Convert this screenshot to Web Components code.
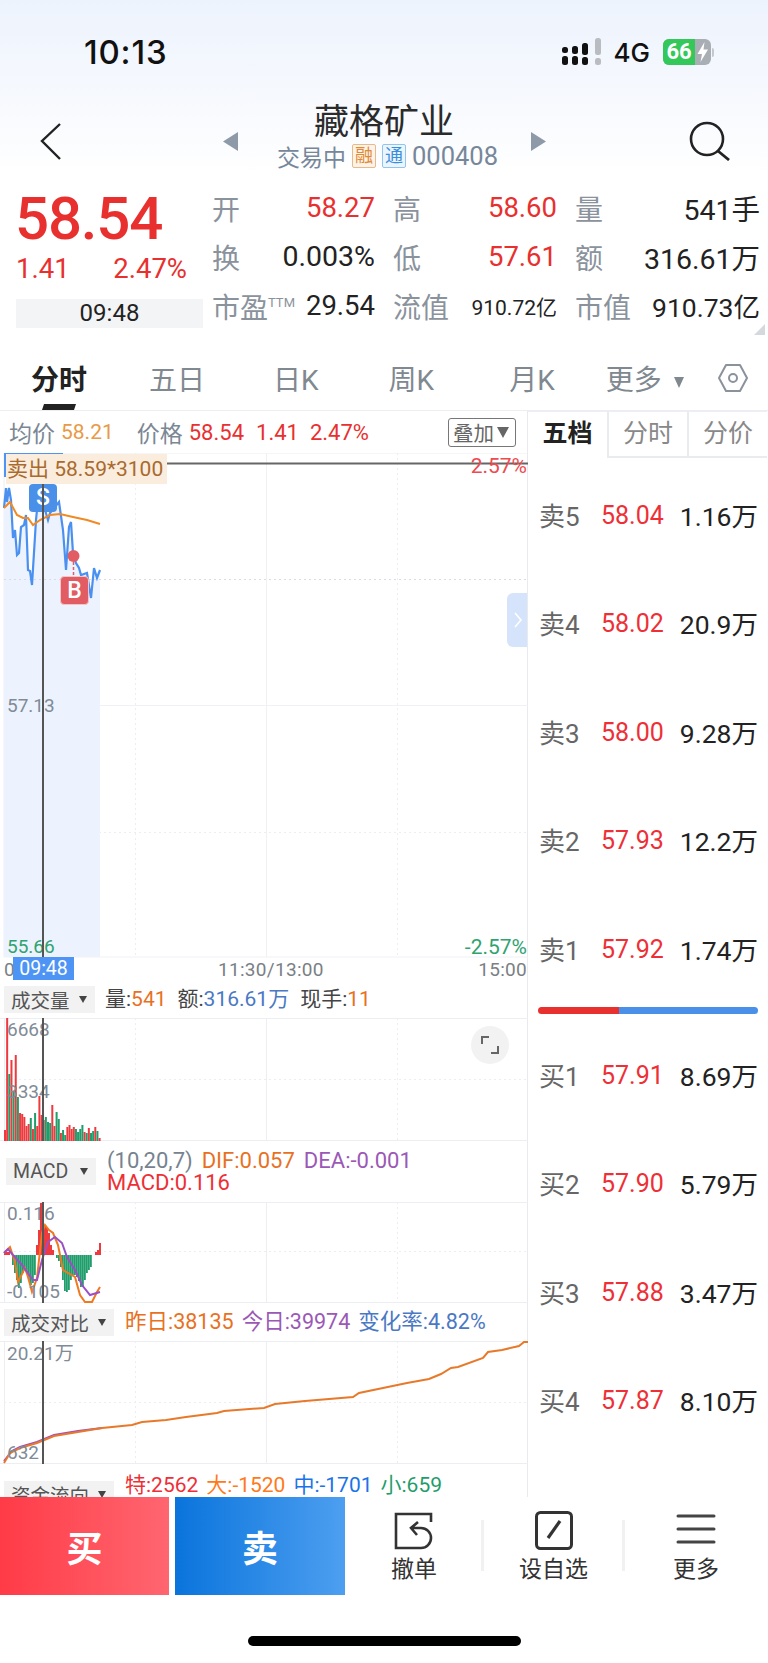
<!DOCTYPE html>
<html lang="zh">
<head>
<meta charset="utf-8">
<title>藏格矿业</title>
<style>
    html, body { margin: 0; padding: 0; background: #fff; }
    body {
        width: 768px;
        height: 1663px;
        overflow: hidden;
        display: flex;
        flex-direction: column;
        font-family: Roboto, "Noto Sans CJK SC", sans-serif;
        color: #222;
    }
    .gray { color: #76838f; }
    .dark { color: #444; }
    .orange { color: #e8711f; }
    .blue { color: #4a78c4; }
    .purple { color: #9b59b6; }
    .red { color: #ee2f36; }
    .flow-orange { color: #ff7a1a; }
    .flow-blue { color: #1a73e8; }
    .flow-green { color: #1f9d6a; }
    .main-row { display: grid; grid-template-columns: 528px 240px; height: 1086px; overflow: hidden; flex: none; }
    .chart-column { min-width: 0; }
</style>
</head>
<body>
<stock-header>
    <status-bar></status-bar>
    <stock-title></stock-title>
    <quote-panel></quote-panel>
</stock-header>
<period-tabs></period-tabs>
<div class="main-row">
    <div class="chart-column">
        <price-head></price-head>
        <minute-chart></minute-chart>
        <indicator-pane label="成交量" label-width="91" head-height="38" chart-height="123" kind="volume" gap="11" offset="10" font="21">
            <span class="dark">量:<span class="orange">541</span></span>
            <span class="dark">额:<span class="blue">316.61万</span></span>
            <span class="dark">现手:<span class="orange">11</span></span>
        </indicator-pane>
        <indicator-pane label="MACD" label-width="90" head-height="61" chart-height="101" kind="macd" gap="9" offset="11" label-left="6" font="22" wrap>
            <span class="gray">(10,20,7)</span>
            <span class="orange">DIF:0.057</span>
            <span class="purple">DEA:-0.001</span>
            <span class="red">MACD:0.116</span>
        </indicator-pane>
        <indicator-pane label="成交对比" label-width="110" head-height="38" chart-height="123" kind="compare" gap="8" offset="11" font="21.5">
            <span class="orange">昨日:38135</span>
            <span class="purple">今日:39974</span>
            <span class="blue">变化率:4.82%</span>
        </indicator-pane>
        <indicator-pane label="资金流向" label-width="110" head-height="38" chart-height="0" kind="flow" gap="8" offset="11" font="21" raised>
            <span class="red">特:2562</span>
            <span class="flow-orange">大:-1520</span>
            <span class="flow-blue">中:-1701</span>
            <span class="flow-green">小:659</span>
        </indicator-pane>
    </div>
    <order-book></order-book>
</div>
<trade-bar></trade-bar>
<home-bar></home-bar>

<script>
const GRID = '#eceef2';

const toPoints = list => list.map(p => p.join(',')).join(' ');

class StockHeader extends HTMLElement {
    constructor() {
        super();
        this.attachShadow({ mode: 'open' });
        this.shadowRoot.innerHTML = `
            <style>
                :host {
                    display: block;
                    height: 339px;
                    flex: none;
                    background: linear-gradient(#edf3fd 0, #f8fafe 110px, #fff 175px);
                }
            </style>
            <slot></slot>
        `;
    }
}

class StatusBar extends HTMLElement {
    constructor() {
        super();
        this.attachShadow({ mode: 'open' });
        this.shadowRoot.innerHTML = `
            <style>
                :host {
                    display: flex;
                    align-items: center;
                    height: 104px;
                    padding: 0 54px 0 84px;
                    box-sizing: border-box;
                    color: #111;
                }
                .time { font: 500 33px Inter, sans-serif; letter-spacing: 0.8px; flex: 1; }
                svg { display: block; }
                .net { font: 500 26px Inter, sans-serif; margin: 0 13px 0 12px; }
                .battery {
                    display: flex;
                    width: 48px;
                    height: 26px;
                    border-radius: 6px;
                    overflow: hidden;
                    background: #a9aeb4;
                }
                .level {
                    width: 32px;
                    background: #34c759;
                    color: #fff;
                    font: 700 22px/26px Roboto, sans-serif;
                    text-align: center;
                }
                .nub { width: 2px; height: 9px; margin-left: 1px; background: #c4c8cc; border-radius: 0 2px 2px 0; }
            </style>
            <span class="time">10:13</span>
            <svg width="40" height="28" viewBox="0 0 40 28">
                <g fill="#111">
                    <rect x="0" y="9" width="6" height="6" rx="2.5"/><rect x="0" y="18" width="6" height="9" rx="2.5"/>
                    <rect x="10" y="8" width="6" height="8" rx="2.5"/><rect x="10" y="18" width="6" height="9" rx="2.5"/>
                    <rect x="20" y="5" width="6" height="12" rx="2.5"/><rect x="20" y="19" width="6" height="8" rx="2.5"/>
                </g>
                <rect x="33" y="0" width="6" height="17" rx="2.5" fill="#b9bdc2"/>
                <rect x="33" y="20" width="6" height="7" rx="2.5" fill="#b9bdc2"/>
            </svg>
            <span class="net">4G</span>
            <div class="battery">
                <div class="level">66</div>
                <svg width="16" height="26" viewBox="0 0 16 26"><path d="M9.5 3 L2.5 15 H7 L5.5 23 L13 10.5 H8.5 Z" fill="#fff"/></svg>
            </div>
            <div class="nub"></div>
        `;
    }
}

class StockTitle extends HTMLElement {
    constructor() {
        super();
        this.attachShadow({ mode: 'open' });
        this.shadowRoot.innerHTML = `
            <style>
                :host {
                    display: grid;
                    grid-template-columns: 274px 220px 274px;
                    height: 74px;
                }
                .side { display: flex; align-items: center; justify-content: space-between; padding-bottom: 6px; }
                .left { padding: 0 36px 0 40px; }
                .right { padding: 0 37px 0 37px; }
                svg { display: block; }
                .center { display: flex; flex-direction: column; align-items: center; }
                h1 { margin: 0; font-weight: 400; font-size: 35px; line-height: 37px; color: #2b2b2b; white-space: nowrap; }
                .sub { display: flex; align-items: center; gap: 6px; margin: 2px 0 0 3px; align-self: flex-start; white-space: nowrap; color: #77879a; height: 25px; }
                .sub span:first-child { font-size: 23px; }
                .badge {
                    width: 22px;
                    height: 22px;
                    font-size: 18px;
                    line-height: 21px;
                    text-align: center;
                    border: 1px solid;
                    border-radius: 2px;
                }
                .rong { color: #e08a36; border-color: #e9b98c; background: #fdf3e8; }
                .tong { color: #3a8fdc; border-color: #93c4ee; background: #ebf5fd; }
                .code { font-size: 25.5px; }
            </style>
            <div class="side left">
                <svg width="22" height="38" viewBox="0 0 22 38"><path d="M20 2 L2 19 L20 37" fill="none" stroke="#222" stroke-width="2.4"/></svg>
                <svg width="15" height="19" viewBox="0 0 15 19"><path d="M15 0 V19 L0 9.5 Z" fill="#8e9aa8"/></svg>
            </div>
            <div class="center">
                <h1>藏格矿业</h1>
                <div class="sub">
                    <span>交易中</span><span class="badge rong">融</span><span class="badge tong">通</span><span class="code">000408</span>
                </div>
            </div>
            <div class="side right">
                <svg width="15" height="19" viewBox="0 0 15 19"><path d="M0 0 V19 L15 9.5 Z" fill="#8e9aa8"/></svg>
                <svg width="42" height="40" viewBox="0 0 42 40"><circle cx="18" cy="18" r="16" fill="none" stroke="#222" stroke-width="2.6"/><path d="M29 30 L40 39" stroke="#222" stroke-width="2.8"/></svg>
            </div>
        `;
    }
}

class QuotePanel extends HTMLElement {
    constructor() {
        super();
        this.attachShadow({ mode: 'open' });
        const stats = [
            ['开', '58.27', 'up'], ['高', '58.60', 'up'], ['量', '541手', 'wide'],
            ['换', '0.003%', 'wide'], ['低', '57.61', 'up'], ['额', '316.61万', 'wide'],
            ['市盈<sup>TTM</sup>', '29.54', ''], ['流值', '910.72亿', 'small'], ['市值', '910.73亿', 'narrow']
        ];
        this.shadowRoot.innerHTML = `
            <style>
                :host {
                    display: flex;
                    position: relative;
                    height: 161px;
                    box-sizing: border-box;
                    padding: 5px 8px 0 16px;
                }
                .price { width: 196px; flex: none; }
                .last { font-size: 60px; font-weight: 500; line-height: 66px; letter-spacing: -1.2px; color: #e8302f; margin: 3px 0 0 -1px; }
                .change {
                    display: flex;
                    justify-content: space-between;
                    width: 171px;
                    font-size: 27.5px;
                    line-height: 34px;
                    color: #e8302f;
                }
                .clock {
                    width: 187px;
                    height: 29px;
                    margin-top: 13px;
                    background: #f3f4f6;
                    font-size: 24px;
                    line-height: 28px;
                    text-align: center;
                }
                .stats {
                    display: grid;
                    grid-template-columns: 163px 164px 185px;
                    grid-auto-rows: 49px;
                    column-gap: 18px;
                }
                .cell { display: flex; justify-content: space-between; align-items: center; white-space: nowrap; }
                .label { font-size: 28px; color: #8a929c; }
                sup { font-size: 13px; vertical-align: 11px; line-height: 0; }
                .value { font-size: 27.5px; color: #222; }
                .up { color: #e8302f; }
                .small { font-size: 21px; }
                .wide { font-size: 28.5px; }
                .narrow { font-size: 26.5px; }
                .corner { position: absolute; right: 3px; bottom: 4px; width: 0; height: 0; border-left: 11px solid transparent; border-bottom: 11px solid #d5d8dd; }
            </style>
            <div class="price">
                <div class="last">58.54</div>
                <div class="change"><span>1.41</span><span>2.47%</span></div>
                <div class="clock">09:48</div>
            </div>
            <div class="stats">
                ${stats.map(s => `
                    <div class="cell"><span class="label">${s[0]}</span><span class="value ${s[2]}">${s[1]}</span></div>
                `).join('')}
            </div>
            <div class="corner"></div>
        `;
    }
}

class PeriodTabs extends HTMLElement {
    constructor() {
        super();
        this.attachShadow({ mode: 'open' });
        this.shadowRoot.innerHTML = `
            <style>
                :host {
                    display: flex;
                    align-items: flex-start;
                    height: 62px;
                    flex: none;
                    box-sizing: border-box;
                    margin-top: 10px;
                    border-bottom: 1px solid #eceef3;
                    color: #808890;
                    font-size: 28px;
                    white-space: nowrap;
                    position: relative;
                }
                span { line-height: 40px; margin-top: 12px; }
                .on { color: #222; font-weight: 700; position: relative; width: 56px; margin-left: 31px; }
                .on::after {
                    content: '';
                    position: absolute;
                    left: 11px;
                    top: 43px;
                    width: 34px;
                    height: 6px;
                    background: #222;
                    clip-path: polygon(2px 0, 100% 0, calc(100% - 2px) 100%, 0 100%);
                }
                .arrow { width: 0; height: 0; margin: 28px 0 0 12px; border: 5.5px solid transparent; border-top: 11px solid #808890; border-bottom: 0; }
                svg { display: block; margin: 14px 0 0 33px; }
            </style>
            <span class="on">分时</span>
            <span style="margin-left:62px">五日</span>
            <span style="margin-left:68px">日K</span>
            <span style="margin-left:70px">周K</span>
            <span style="margin-left:75px">月K</span>
            <span style="margin-left:51px">更多</span>
            <i class="arrow"></i>
            <svg width="32" height="30" viewBox="0 0 32 30"><path d="M9 2 H23 L30 15 L23 28 H9 L2 15 Z" fill="none" stroke="#8a929c" stroke-width="2" stroke-linejoin="round"/><circle cx="16" cy="15" r="4" fill="none" stroke="#8a929c" stroke-width="2"/></svg>
        `;
    }
}

class PriceHead extends HTMLElement {
    constructor() {
        super();
        this.attachShadow({ mode: 'open' });
        this.shadowRoot.innerHTML = `
            <style>
                :host {
                    display: flex;
                    align-items: center;
                    height: 42px;
                    padding: 0 12px 0 9px;
                    font-size: 22px;
                    color: #7b8794;
                    white-space: nowrap;
                }
                .label { font-size: 23px; }
                .avg { color: #e89a45; margin-left: 6px; font-size: 21px; }
                .up { color: #e8302f; }
                .overlay {
                    display: flex;
                    align-items: center;
                    gap: 3px;
                    margin-left: auto;
                    width: 68px;
                    height: 29px;
                    box-sizing: border-box;
                    padding-left: 4px;
                    border: 1px solid #777;
                    border-radius: 3px;
                    color: #666;
                    font-size: 20.5px;
                }
                i { width: 0; height: 0; border: 6px solid transparent; border-top: 11px solid #666; border-bottom: 0; }
            </style>
            <span class="label">均价</span><span class="avg">58.21</span>
            <span class="label" style="margin-left:23px">价格</span>
            <span class="up" style="margin-left:6px">58.54</span>
            <span class="up" style="margin-left:12px">1.41</span>
            <span class="up" style="margin-left:11px">2.47%</span>
            <div class="overlay"><span>叠加</span><i></i></div>
        `;
    }
}

class MinuteChart extends HTMLElement {
    constructor() {
        super();
        this.attachShadow({ mode: 'open' });
        const blue = [[4,508],[6,488],[7,502],[9,488],[11,500],[13,538],[15,530],[17,555],[19,553],[21,527],[24,525],[26,515],[28,570],[30,571],[32,585],[36,520],[38,500],[43,503],[48,520],[50,513],[59,502],[63,530],[66,570],[69,527],[71,522],[73,553],[76,563],[79,568],[81,575],[87,573],[91,598],[94,568],[97,578],[100,570]];
        const avg = [[4,508],[10,502],[17,515],[23,518],[28,518],[33,525],[40,520],[50,515],[60,514],[73,517],[87,520],[100,524]];
        this.shadowRoot.innerHTML = `
            <style>
                :host {
                    display: block;
                    position: relative;
                    height: 527px;
                    font-size: 19px;
                    color: #7f8b97;
                    overflow: hidden;
                }
                svg { position: absolute; left: 0; top: 0; display: block; }
                .abs { position: absolute; white-space: nowrap; line-height: 22px; }
                .green { color: #2fa36f; }
                .sell-tag { left: 6px; top: 1px; width: 161px; height: 30px; box-sizing: border-box; padding-left: 1px; background: #faeddd; color: #a96a2e; font-size: 21px; line-height: 30px; }
                .pct-up { right: 1px; top: 2px; color: #ee4a4f; font-size: 21px; }
                .pct-down { right: 1px; top: 483px; font-size: 21px; }
                .mark { width: 28px; height: 28px; border-radius: 4px; color: #fff; font-size: 23px; font-weight: 500; line-height: 28px; text-align: center; }
                .s { left: 29px; top: 31px; background: #4a90e8; }
                .b { left: 60px; top: 123px; height: 29px; background: #e25d63; border: 1px solid #f2c6c8; box-sizing: border-box; width: 29px; }
                .cursor { position: absolute; left: 42px; top: 31px; width: 1.5px; height: 473px; background: #555; }
                .cursor-time { left: 13px; top: 504px; width: 61px; height: 23px; background: #4d94f5; color: #fff; text-align: center; line-height: 23px; font-size: 19.5px; }
                .axis { letter-spacing: 0.3px; font-size: 19px; line-height: 20px; top: 507px; color: #7a7f85; }
                .slide { position: absolute; right: 1px; top: 140px; width: 20px; height: 54px; background: #d5e4fb; border-radius: 6px 0 0 6px; }
            </style>
            <svg width="528" height="527" viewBox="0 453 528 527">
                <path d="M4 453 V957" stroke="${GRID}" stroke-width="1"/>
                <path d="M135.5 453 V957 M397.5 453 V957 M4 579.5 H528 M4 832.5 H528" stroke="${GRID}" stroke-width="1" stroke-dasharray="2 3"/>
                <path d="M266.5 453 V957 M4 705.5 H528 M4 957 H528" stroke="#f0f1f5" stroke-width="1"/>
                <path d="M4 453 H528" stroke="${GRID}" stroke-width="1"/>
                <polygon points="${toPoints(blue)} 100,957 4,957" fill="#edf3fe"/>
                <path d="M4 579.5 H528" stroke="#d9dde3" stroke-width="1" stroke-dasharray="2 3"/>
                <polyline points="${toPoints(blue)}" fill="none" stroke="#4a90f0" stroke-width="2.2"/>
                <polyline points="${toPoints(avg)}" fill="none" stroke="#f08a24" stroke-width="2"/>
                <path d="M4 454 H63 M5 453 V477" stroke="#4d94f5" stroke-width="2"/>
                <path d="M167 463.5 H528" stroke="#666" stroke-width="2"/>
                <circle cx="73.5" cy="556" r="6" fill="#e25d63"/>
                <path d="M73.5 562 V577" stroke="#e25d63" stroke-width="1.5" stroke-dasharray="3 2"/>
            </svg>
            <span class="abs sell-tag">卖出 58.59*3100</span>
            <span class="abs pct-up">2.57%</span>
            <span class="abs" style="left:7px;top:242px">57.13</span>
            <span class="abs green" style="left:7px;top:483px">55.66</span>
            <span class="abs green pct-down">-2.57%</span>
            <span class="abs mark s">S</span>
            <span class="abs mark b">B</span>
            <div class="cursor"></div>
            <span class="abs axis" style="left:4px">0</span>
            <span class="abs cursor-time">09:48</span>
            <span class="abs axis" style="left:218px">11:30/13:00</span>
            <span class="abs axis" style="right:1px">15:00</span>
            <div class="slide">
                <svg width="20" height="54" viewBox="0 0 20 54"><path d="M8 20 L14 27 L8 34" fill="none" stroke="#fff" stroke-width="1.6"/></svg>
            </div>
        `;
    }
}

// each pane draws its own chart, coordinates are page coordinates via viewBox
const PANE_CHARTS = {
    volume() {
        const bars = [[11,'r'],[123,'r'],[67,'g'],[81,'r'],[50,'g'],[86,'r'],[44,'g'],[28,'r'],[27,'r'],[24,'r'],[15,'r'],[17,'r'],[23,'g'],[12,'r'],[28,'g'],[15,'r'],[45,'r'],[26,'r'],[21,'r'],[24,'g'],[19,'g'],[18,'g'],[36,'r'],[15,'r'],[29,'g'],[22,'g'],[8,'r'],[11,'g'],[6,'g'],[14,'r'],[16,'r'],[12,'r'],[14,'r'],[12,'g'],[9,'g'],[12,'g'],[16,'g'],[9,'r'],[8,'g'],[13,'r'],[8,'g'],[10,'g'],[14,'r'],[10,'g'],[3,'r']];
        return {
            svg: bars.map((b, i) => `<rect x="${(4 + i * 2.15).toFixed(2)}" y="${1141 - b[0]}" width="2" height="${b[0]}" fill="${b[1] === 'r' ? '#ee3a3f' : '#1f9d6a'}"/>`).join(''),
            labels: `<span class="abs" style="left:7px;top:1px">6668</span><span class="abs" style="left:7px;top:63px">3334</span>
                <div class="fit">
                    <svg width="38" height="38" viewBox="0 0 38 38" style="display:block"><path d="M11 18 V11 H18 M27 20 V27 H20" fill="none" stroke="#666" stroke-width="2"/></svg>
                </div>`,
            mid: 1079,
            top: 1018
        };
    },
    macd() {
        const zero = 1255;
        const red = [[4,3],[6,3],[8,3],[36,10],[38,25],[40,52],[42,52],[44,30],[46,27],[48,22],[50,10],[52,5],[95,3],[97,5],[99,12]];
        const green = [[12,10],[14,18],[16,25],[18,33],[20,28],[22,18],[24,12],[26,18],[28,25],[30,30],[32,28],[34,20],[56,3],[58,6],[60,12],[62,25],[64,36],[66,37],[68,35],[70,25],[72,20],[74,20],[76,22],[78,26],[80,32],[82,32],[84,25],[86,18],[88,15],[90,12]];
        const dif = [[4,1253],[10,1247],[15,1262],[18,1282],[25,1268],[28,1277],[32,1292],[37,1278],[42,1233],[45,1225],[49,1230],[53,1233],[58,1245],[63,1270],[68,1273],[75,1277],[80,1295],[85,1302],[92,1302],[97,1292],[100,1287]];
        const dea = [[4,1253],[8,1249],[13,1255],[22,1265],[33,1280],[37,1280],[42,1260],[48,1242],[55,1237],[62,1243],[67,1257],[75,1270],[82,1285],[90,1295],[100,1292]];
        return {
            svg: red.map(b => `<rect x="${b[0]}" y="${zero - b[1]}" width="2" height="${b[1]}" fill="#ee3a3f"/>`).join('')
                + green.map(b => `<rect x="${b[0]}" y="${zero}" width="1.8" height="${b[1]}" fill="#1f9d6a"/>`).join('')
                + `<polyline points="${toPoints(dif)}" fill="none" stroke="#f0791f" stroke-width="2"/>
                   <polyline points="${toPoints(dea)}" fill="none" stroke="#9b4fc4" stroke-width="2"/>`,
            labels: `<span class="abs" style="left:7px;top:1px">0.116</span><span class="abs" style="left:7px;top:79px">-0.105</span>`,
            mid: 1251,
            top: 1202
        };
    },
    compare() {
        const today = [[4,1463],[10,1453],[20,1448],[37,1443],[54,1436],[78,1432],[102,1428],[132,1425],[142,1422],[166,1420],[186,1417],[217,1413],[224,1411],[264,1408],[275,1404],[305,1401],[353,1397],[359,1393],[383,1388],[407,1383],[429,1379],[441,1374],[451,1368],[458,1367],[483,1358],[488,1352],[502,1350],[519,1346],[524,1342],[528,1342]];
        const past = [[4,1461],[12,1451],[20,1447],[37,1442],[54,1435],[78,1431],[102,1428]];
        return {
            svg: `<polyline points="${toPoints(past)}" fill="none" stroke="#9b4fc4" stroke-width="2"/>
                  <polyline points="${toPoints(today)}" fill="none" stroke="#e8792a" stroke-width="2"/>`,
            labels: `<span class="abs" style="left:7px;top:2px">20.21万</span><span class="abs" style="left:7px;top:101px">632</span>`,
            mid: 1402,
            top: 1341
        };
    }
};

class IndicatorPane extends HTMLElement {
    connectedCallback() {
        if (this.shadowRoot) return;
        this.attachShadow({ mode: 'open' });
        const headHeight = +this.getAttribute('head-height');
        const chartHeight = +this.getAttribute('chart-height');
        const labelLeft = +(this.getAttribute('label-left') || 4);
        const labelWidth = +this.getAttribute('label-width');
        const gap = +(this.getAttribute('gap') || 11);
        const offset = +this.getAttribute('offset');
        const draw = PANE_CHARTS[this.getAttribute('kind')];
        const chart = draw ? draw() : null;
        const raised = this.hasAttribute('raised');
        this.shadowRoot.innerHTML = `
            <style>
                :host {
                    display: block;
                    font-size: ${this.getAttribute('font') || 20}px;
                    color: #444;
                }
                .head {
                    display: flex;
                    align-items: ${raised ? 'flex-start' : 'center'};
                    height: ${headHeight}px;
                    padding-left: ${labelLeft}px;
                    box-sizing: border-box;
                    overflow: ${raised ? 'visible' : 'hidden'};
                    white-space: nowrap;
                }
                .picker {
                    display: flex;
                    align-items: center;
                    justify-content: space-between;
                    flex: none;
                    width: ${labelWidth}px;
                    height: 27px;
                    box-sizing: border-box;
                    padding: 0 8px 0 7px;
                    background: #f2f2f2;
                    color: #555;
                    font-size: 19.5px;
                    ${raised ? 'margin-top: 17px;' : ''}
                }
                .picker i { width: 0; height: 0; border: 4px solid transparent; border-top: 7px solid #444; border-bottom: 0; }
                .values {
                    display: flex;
                    flex-wrap: ${this.hasAttribute('wrap') ? 'wrap' : 'nowrap'};
                    column-gap: ${gap}px;
                    margin-left: ${offset}px;
                    line-height: 22px;
                    ${raised ? 'margin-top: 10px;' : ''}
                    ${this.hasAttribute('wrap') ? 'width: 325px;' : ''}
                }
                .chart {
                    position: relative;
                    height: ${chartHeight}px;
                    font-size: 19px;
                    color: #7f8b97;
                    overflow: hidden;
                }
                .chart > svg { position: absolute; left: 0; top: 0; display: block; }
                .abs { position: absolute; white-space: nowrap; line-height: 22px; }
                .cursor { position: absolute; left: 42px; top: 0; bottom: 0; width: 1.5px; background: #555; }
                .fit { position: absolute; left: 471px; top: 8px; width: 38px; height: 38px; border-radius: 50%; background: #f2f2f2; }
            </style>
            <div class="head">
                <div class="picker"><span>${this.getAttribute('label')}</span><i></i></div>
                <div class="values"><slot></slot></div>
            </div>
            ${chart ? `
            <div class="chart">
                <svg width="528" height="${chartHeight}" viewBox="0 ${chart.top} 528 ${chartHeight}">
                    <path d="M0 ${chart.top + 0.5} H528 M0 ${chart.top + chartHeight - 0.5} H528 M4.5 ${chart.top} V${chart.top + chartHeight} M266.5 ${chart.top} V${chart.top + chartHeight}" stroke="${GRID}"/>
                    <path d="M135.5 ${chart.top} V${chart.top + chartHeight} M397.5 ${chart.top} V${chart.top + chartHeight} M4 ${chart.mid + 0.5} H528" stroke="${GRID}" stroke-dasharray="2 3"/>
                    ${chart.svg}
                </svg>
                ${chart.labels}
                <div class="cursor"></div>
            </div>` : ''}
        `;
    }
}

class OrderBook extends HTMLElement {
    constructor() {
        super();
        this.attachShadow({ mode: 'open' });
        const asks = [['卖5','58.04','1.16万'],['卖4','58.02','20.9万'],['卖3','58.00','9.28万'],['卖2','57.93','12.2万'],['卖1','57.92','1.74万']];
        const bids = [['买1','57.91','8.69万'],['买2','57.90','5.79万'],['买3','57.88','3.47万'],['买4','57.87','8.10万']];
        const row = r => `<div class="row"><span class="name">${r[0]}</span><span class="px">${r[1]}</span><span class="vol">${r[2]}</span></div>`;
        this.shadowRoot.innerHTML = `
            <style>
                :host {
                    display: block;
                    box-sizing: border-box;
                    border-left: 1px solid #e8eaee;
                    margin-left: -1px;
                    width: 241px;
                    font-size: 25px;
                    overflow: hidden;
                }
                .tabs { display: grid; grid-template-columns: 79px 80px 80px; height: 44px; margin-bottom: 6px; }
                .tabs span { text-align: center; line-height: 44px; color: #888; box-sizing: border-box; border-left: 2px solid #e9ebee; border-bottom: 2px solid #e9ebee; border-top: 1px solid #eceef3; }
                .tabs .on { color: #222; font-weight: 700; border-left: 0; border-bottom: 0; }
                .row { display: grid; grid-template-columns: 62px 1fr auto; align-items: center; height: 108.5px; padding: 0 10px 0 11px; }
                .name { color: #666; font-size: 26px; margin-top: -2px; }
                .px { color: #ee2f36; font-weight: 450; }
                .vol { color: #222; font-size: 26.5px; margin-top: -2px; }
                .ratio { display: flex; height: 7px; margin: 3px 10px 7.5px 10px; border-radius: 4px; overflow: hidden; }
                .ratio .b { width: 81px; background: #e8302f; }
                .ratio .s { flex: 1; background: #4a90e8; }
            </style>
            <div class="tabs"><span class="on">五档</span><span>分时</span><span>分价</span></div>
            ${asks.map(row).join('')}
            <div class="ratio"><div class="b"></div><div class="s"></div></div>
            ${bids.map(row).join('')}
        `;
    }
}

class TradeBar extends HTMLElement {
    constructor() {
        super();
        this.attachShadow({ mode: 'open' });
        this.shadowRoot.innerHTML = `
            <style>
                :host {
                    display: grid;
                    grid-template-columns: 169px 176px 138px 141px 144px;
                    height: 98px;
                    flex: none;
                    background: #fff;
                }
                .trade { color: #fff; font-size: 36px; font-weight: 700; display: flex; align-items: center; justify-content: center; }
                .buy { background: linear-gradient(90deg, #ff3b47, #ff6670); }
                .sell { background: linear-gradient(90deg, #0a74dc, #4d9ff0); margin-left: 6px; }
                .tool { position: relative; display: flex; flex-direction: column; align-items: center; color: #333; font-size: 23px; }
                .tool svg { display: block; height: 42px; margin-top: 14px; }
                .tool span { line-height: 28px; margin-top: 3px; }
                .line::after { content: ''; position: absolute; right: -1px; top: 23px; width: 3px; height: 51px; background: #f1f1f1; }
            </style>
            <div class="trade buy">买</div>
            <div class="trade sell">卖</div>
            <div class="tool line">
                <svg width="40" height="42" viewBox="0 0 40 42"><path d="M37 11 V3 H2 V37 H27 M27 37 A10 10 0 0 0 27 17 H18 M24 11 L17 17 L23 24" fill="none" stroke="#333" stroke-width="2.6"/></svg>
                <span>撤单</span>
            </div>
            <div class="tool line">
                <svg width="40" height="42" viewBox="0 0 40 42"><rect x="2.5" y="1.5" width="35" height="36" rx="4" fill="none" stroke="#333" stroke-width="3"/><path d="M14 27 L26 10" stroke="#333" stroke-width="3.2"/></svg>
                <span>设自选</span>
            </div>
            <div class="tool">
                <svg width="40" height="42" viewBox="0 0 40 42"><path d="M2 5 H38 M2 18 H38 M2 31 H38" stroke="#444" stroke-width="3" stroke-linecap="round"/></svg>
                <span>更多</span>
            </div>
        `;
    }
}

class HomeBar extends HTMLElement {
    constructor() {
        super();
        this.attachShadow({ mode: 'open' });
        this.shadowRoot.innerHTML = `
            <style>
                :host { display: flex; justify-content: center; flex: 1; padding-top: 41px; background: #fff; }
                div { width: 273px; height: 10px; border-radius: 5px; background: #000; }
            </style>
            <div></div>
        `;
    }
}

customElements.define('stock-header', StockHeader);
customElements.define('status-bar', StatusBar);
customElements.define('stock-title', StockTitle);
customElements.define('quote-panel', QuotePanel);
customElements.define('period-tabs', PeriodTabs);
customElements.define('price-head', PriceHead);
customElements.define('minute-chart', MinuteChart);
customElements.define('indicator-pane', IndicatorPane);
customElements.define('order-book', OrderBook);
customElements.define('trade-bar', TradeBar);
customElements.define('home-bar', HomeBar);
</script>
</body>
</html>
